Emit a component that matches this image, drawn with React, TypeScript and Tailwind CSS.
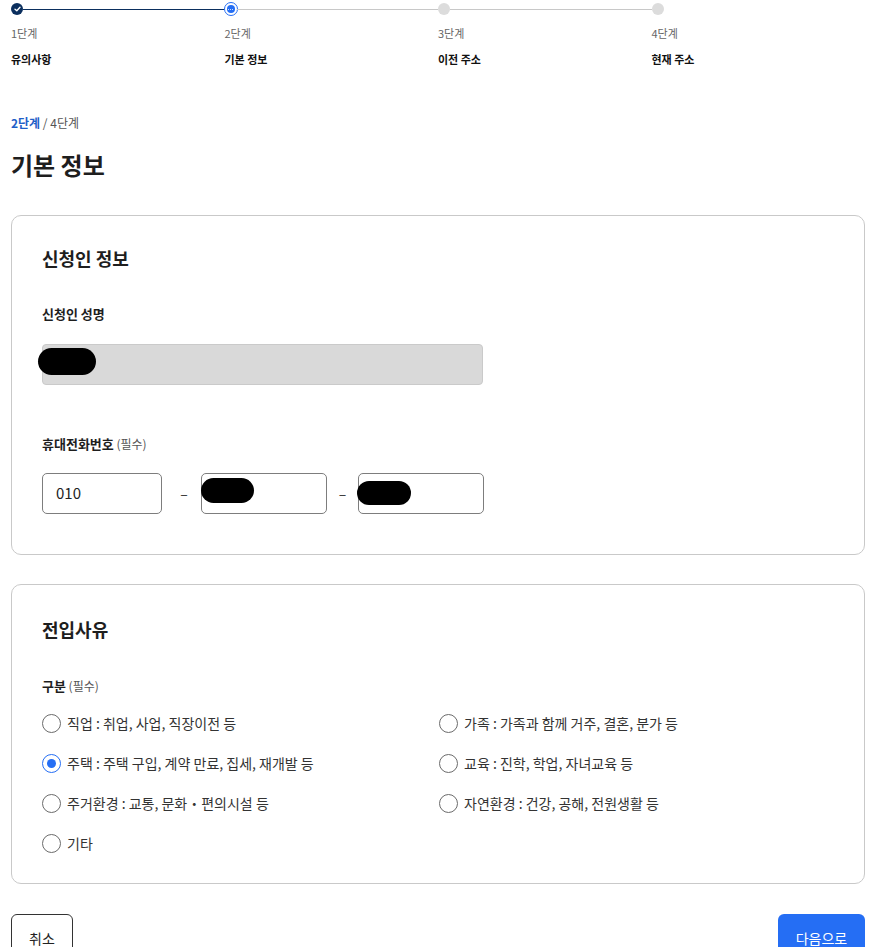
import React from "react";

const font = { fontFamily: '"Noto Sans CJK KR", "Noto Sans", sans-serif' };

function StepDot({ state }: { state: "done" | "current" | "todo" }) {
  if (state === "done") {
    return (
      <div className="w-[12px] h-[12px] rounded-full bg-[#0b2f5e] flex items-center justify-center shrink-0">
        <svg width="7" height="6" viewBox="0 0 7 6" fill="none">
          <path d="M1 3.2 L2.8 4.8 L6 1.2" stroke="white" strokeWidth="1.3" strokeLinecap="round" strokeLinejoin="round" />
        </svg>
      </div>
    );
  }
  if (state === "current") {
    return (
      <div className="w-[14px] h-[14px] -mx-[1px] rounded-full bg-white border-[1.5px] border-[#256ef4] flex items-center justify-center shrink-0">
        <div className="w-[8px] h-[8px] rounded-full bg-[#256ef4] flex items-center justify-center gap-[1px]">
          <span className="w-[1px] h-[1px] bg-white rounded-full" />
          <span className="w-[1px] h-[1px] bg-white rounded-full" />
          <span className="w-[1px] h-[1px] bg-white rounded-full" />
        </div>
      </div>
    );
  }
  return <div className="w-[12px] h-[12px] rounded-full bg-[#dcdcdc] shrink-0" />;
}

const steps = [
  { n: "1단계", t: "유의사항", s: "done" as const, line: "bg-[#0b2f5e]" },
  { n: "2단계", t: "기본 정보", s: "current" as const, line: "bg-[#c8c8c8]" },
  { n: "3단계", t: "이전 주소", s: "todo" as const, line: "bg-[#c8c8c8]" },
  { n: "4단계", t: "현재 주소", s: "todo" as const, line: "" },
];

function Radio({ checked, label }: { checked?: boolean; label: string }) {
  return (
    <div className="flex items-center h-[24px]">
      {checked ? (
        <div className="w-[19px] h-[19px] rounded-full border-[1.5px] border-[#256ef4] flex items-center justify-center bg-white">
          <div className="w-[9px] h-[9px] rounded-full bg-[#256ef4]" />
        </div>
      ) : (
        <div className="w-[19px] h-[19px] rounded-full border-[1.5px] border-[#6b6b6b] bg-white" />
      )}
      <span className="ml-[6px] text-[14px] text-[#333]">{label}</span>
    </div>
  );
}

export default function App() {
  return (
    <div className="bg-white min-h-[947px] text-[#1e1e1e]" style={font}>
      <div className="ml-[11px] w-[854px]">
        {/* Stepper */}
        <div className="grid grid-cols-4 pt-[3px]">
          {steps.map((st, i) => (
            <div key={i} className="flex flex-col">
              <div className="flex items-center h-[12px]">
                <StepDot state={st.s} />
                {st.line && <div className={`flex-1 h-[1px] ${st.line}`} />}
              </div>
              <div className="mt-[10px] text-[11px] leading-[16px] text-[#666]">{st.n}</div>
              <div className="mt-[10px] text-[11px] leading-[16px] font-bold text-[#111]">{st.t}</div>
            </div>
          ))}
        </div>

        {/* Step indicator */}
        <div className="mt-[47px] text-[12px] leading-[18px] text-[#555]">
          <span className="font-bold text-[#1f5fc8]">2단계</span> / 4단계
        </div>
        <h1 className="mt-[16px] text-[24px] leading-[34px] font-bold text-[#1e1e1e]">기본 정보</h1>

        {/* Card 1 */}
        <div className="mt-[33px] border border-[#c9c9c9] rounded-[10px] px-[30px] pt-[28px] pb-[40px]">
          <h2 className="text-[18px] leading-[28px] font-bold">신청인 정보</h2>
          <div className="mt-[32px] text-[13px] leading-[20px] font-bold">신청인 성명</div>
          <div className="relative mt-[20px] w-[441px] h-[41px] rounded-[4px] bg-[#d9d9d9] border border-[#cacaca]">
            <div className="absolute left-[-5px] top-[3px] w-[58px] h-[27px] rounded-full bg-black" />
          </div>
          <div className="mt-[49px] text-[13px] leading-[20px]">
            <span className="font-bold">휴대전화번호</span>
            <span className="text-[12px] text-[#555]"> (필수)</span>
          </div>
          <div className="mt-[19px] flex items-center">
            <div className="w-[120px] h-[41px] rounded-[5px] border border-[#7d7d7d] flex items-center px-[13px] text-[15px] text-[#222]">
              010
            </div>
            <div className="w-[39px] text-center text-[14px] text-[#333] pl-[5px]">–</div>
            <div className="relative w-[126px] h-[41px] rounded-[5px] border border-[#7d7d7d]">
              <div className="absolute left-[-1px] top-[4px] w-[53px] h-[25px] rounded-full bg-black" />
            </div>
            <div className="w-[31px] text-center text-[14px] text-[#333]">–</div>
            <div className="relative w-[126px] h-[41px] rounded-[5px] border border-[#7d7d7d]">
              <div className="absolute left-[-2px] top-[7px] w-[54px] h-[24px] rounded-full bg-black" />
            </div>
          </div>
        </div>

        {/* Card 2 */}
        <div className="mt-[29px] border border-[#c9c9c9] rounded-[10px] px-[30px] pt-[30px] pb-[28px]">
          <h2 className="text-[18px] leading-[28px] font-bold">전입사유</h2>
          <div className="mt-[33px] text-[13px] leading-[20px]">
            <span className="font-bold">구분</span>
            <span className="text-[12px] text-[#555]"> (필수)</span>
          </div>
          <div className="mt-[15px] grid grid-cols-2 gap-y-[16px] gap-x-[2px]">
            <Radio label="직업 : 취업, 사업, 직장이전 등" />
            <Radio label="가족 : 가족과 함께 거주, 결혼, 분가 등" />
            <Radio checked label="주택 : 주택 구입, 계약 만료, 집세, 재개발 등" />
            <Radio label="교육 : 진학, 학업, 자녀교육 등" />
            <Radio label="주거환경 : 교통, 문화・편의시설 등" />
            <Radio label="자연환경 : 건강, 공해, 전원생활 등" />
            <Radio label="기타" />
          </div>
        </div>

        {/* Buttons */}
        <div className="mt-[30px] flex justify-between items-start">
          <button className="w-[62px] h-[48px] rounded-[6px] border border-[#333] bg-white text-[14px] text-[#222]" style={font}>
            취소
          </button>
          <button className="w-[87px] h-[48px] rounded-[6px] bg-[#256ef4] text-white text-[14px]" style={font}>
            다음으로
          </button>
        </div>
      </div>
    </div>
  );
}
